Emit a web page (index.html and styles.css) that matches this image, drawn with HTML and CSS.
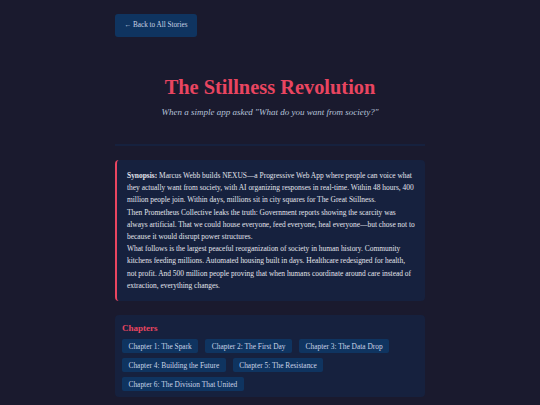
FILE: index.html
```html
<!DOCTYPE html>
<html lang="en">
<head>
    <meta charset="UTF-8">
    <meta name="viewport" content="width=device-width, initial-scale=1.0">
    <title>The Stillness Revolution</title>
    <link rel="stylesheet" href="styles.css">
</head>
<body>
    <div class="container">
        <a href="#" class="back-link">&larr; Back to All Stories</a>

        <header class="story-header">
            <h1>The Stillness Revolution</h1>
            <p class="tagline">When a simple app asked "What do you want from society?"</p>
        </header>

        <section class="synopsis">
            <p><strong>Synopsis:</strong> Marcus Webb builds NEXUS—a Progressive Web App where people can voice what they actually want from society, with AI organizing responses in real-time. Within 48 hours, 400 million people join. Within days, millions sit in city squares for The Great Stillness.</p>
            <p>Then Prometheus Collective leaks the truth: Government reports showing the scarcity was always artificial. That we could house everyone, feed everyone, heal everyone—but chose not to because it would disrupt power structures.</p>
            <p>What follows is the largest peaceful reorganization of society in human history. Community kitchens feeding millions. Automated housing built in days. Healthcare redesigned for health, not profit. And 500 million people proving that when humans coordinate around care instead of extraction, everything changes.</p>
        </section>

        <section class="chapters">
            <h2>Chapters</h2>
            <div class="chapter-list">
                <a href="#">Chapter 1: The Spark</a>
                <a href="#">Chapter 2: The First Day</a>
                <a href="#">Chapter 3: The Data Drop</a>
                <a href="#">Chapter 4: Building the Future</a>
                <a href="#">Chapter 5: The Resistance</a>
                <a href="#">Chapter 6: The Division That United</a>
            </div>
        </section>
    </div>
</body>
</html>
```

FILE: styles.css
```css
body {
    margin: 0;
    background-color: #1a1a2e;
    color: #e2e4ec;
    font-family: "Liberation Serif", Georgia, serif;
}
.container {
    width: 310px;
    margin: 0 auto;
    padding-top: 13px;
}
.back-link {
    display: inline-block;
    background-color: #0f3460;
    color: #c9d3e6;
    text-decoration: none;
    font-size: 7.2px;
    line-height: 9px;
    padding: 7px 9px;
    border-radius: 3px;
}
.story-header {
    text-align: center;
    padding: 38px 0 27px;
    border-bottom: 2px solid #16213e;
}
.story-header h1 {
    margin: 0;
    color: #e94560;
    font-size: 20.4px;
    line-height: 24px;
}
.tagline {
    margin: 8px 0 0;
    font-style: italic;
    font-size: 9px;
    color: #b6c2d9;
}
.synopsis {
    margin-top: 14px;
    background-color: #16213e;
    border-left: 2px solid #e94560;
    border-radius: 4px;
    padding: 10px 10px 9px 10px;
    font-size: 7.45px;
    line-height: 12.2px;
}
.synopsis p {
    margin: 0;
}
.chapters {
    margin-top: 14px;
    background-color: #16213e;
    border-radius: 4px;
    padding: 8px 7px 6px;
}
.chapters h2 {
    margin: 0 0 5px;
    color: #e94560;
    font-size: 9px;
    line-height: 11px;
}
.chapter-list {
    display: flex;
    flex-wrap: wrap;
    gap: 5px 7px;
}
.chapter-list a {
    background-color: #0f3460;
    color: #c9d3e6;
    text-decoration: none;
    font-size: 7.4px;
    line-height: 9px;
    padding: 2.5px 6.5px;
    border-radius: 2px;
}
```
